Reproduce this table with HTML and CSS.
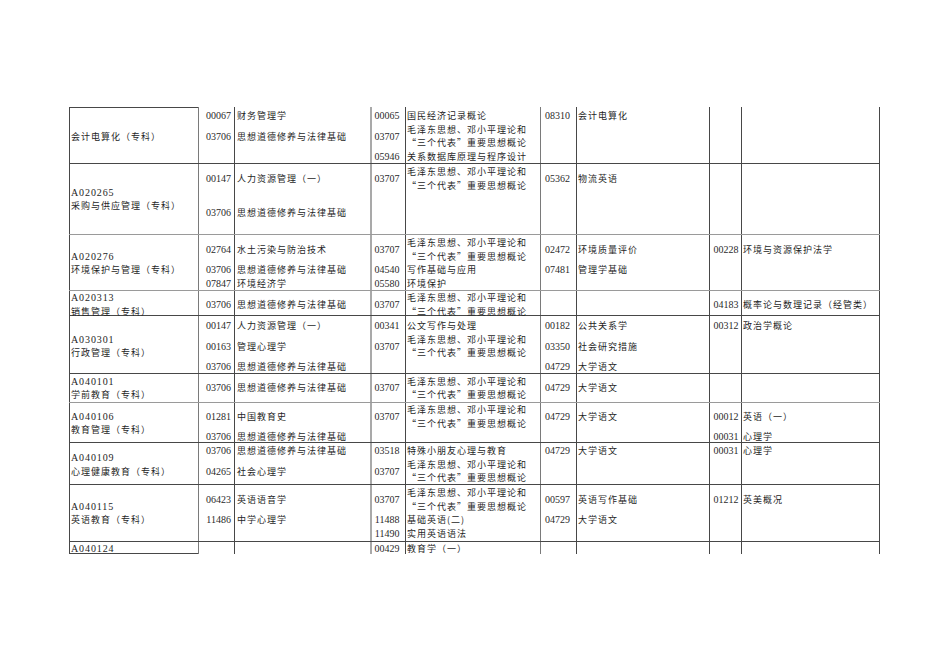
FILE: index.html
```html
<!DOCTYPE html>
<html lang="zh-CN">
<head>
<meta charset="utf-8">
<title>专业课程表</title>
<link rel="stylesheet" href="styles.css">
</head>
<body>
<div class="sheet">

  <div class="r r1">
    <div class="nm top"><div class="ln k3">会计电算化（专科）</div></div>
    <div class="cd"><div class="ln">00067</div><div class="ln k1">03706</div></div>
    <div class="tx"><div class="ln">财务管理学</div><div class="ln k1">思想道德修养与法律基础</div></div>
    <div class="cd"><div class="ln">00065</div><div class="ln k1">03707</div><div class="ln k1">05946</div></div>
    <div class="tx"><div class="ln">国民经济记录概论</div><div class="ln">毛泽东思想、邓小平理论和</div><div class="ln">“三个代表”重要思想概论</div><div class="ln">关系数据库原理与程序设计</div></div>
    <div class="cd"><div class="ln">08310</div></div>
    <div class="tx"><div class="ln">会计电算化</div></div>
    <div class="cd"></div>
    <div class="tx"></div>
  </div>

  <div class="r r2">
    <div class="nm"><div class="ln lat k3">A020265</div><div class="ln">采购与供应管理（专科）</div></div>
    <div class="cd"><div class="ln k1">00147</div><div class="ln k3">03706</div></div>
    <div class="tx"><div class="ln k1">人力资源管理（一）</div><div class="ln k3">思想道德修养与法律基础</div></div>
    <div class="cd"><div class="ln k1">03707</div></div>
    <div class="tx"><div class="ln">毛泽东思想、邓小平理论和</div><div class="ln">“三个代表”重要思想概论</div></div>
    <div class="cd"><div class="ln k1">05362</div></div>
    <div class="tx"><div class="ln k1">物流英语</div></div>
    <div class="cd"></div>
    <div class="tx"></div>
  </div>

  <div class="r r3">
    <div class="nm"><div class="ln lat k2">A020276</div><div class="ln">环境保护与管理（专科）</div></div>
    <div class="cd"><div class="ln k1">02764</div><div class="ln k1">03706</div><div class="ln">07847</div></div>
    <div class="tx"><div class="ln k1">水土污染与防治技术</div><div class="ln k1">思想道德修养与法律基础</div><div class="ln">环境经济学</div></div>
    <div class="cd"><div class="ln k1">03707</div><div class="ln k1">04540</div><div class="ln">05580</div></div>
    <div class="tx"><div class="ln">毛泽东思想、邓小平理论和</div><div class="ln">“三个代表”重要思想概论</div><div class="ln">写作基础与应用</div><div class="ln">环境保护</div></div>
    <div class="cd"><div class="ln k1">02472</div><div class="ln k1">07481</div></div>
    <div class="tx"><div class="ln k1">环境质量评价</div><div class="ln k1">管理学基础</div></div>
    <div class="cd"><div class="ln k1">00228</div></div>
    <div class="tx"><div class="ln k1">环境与资源保护法学</div></div>
  </div>

  <div class="r r4">
    <div class="nm"><div class="ln lat">A020313</div><div class="ln">销售管理（专科）</div></div>
    <div class="cd"><div class="ln k1">03706</div></div>
    <div class="tx"><div class="ln k1">思想道德修养与法律基础</div></div>
    <div class="cd"><div class="ln k1">03707</div></div>
    <div class="tx"><div class="ln">毛泽东思想、邓小平理论和</div><div class="ln">“三个代表”重要思想概论</div></div>
    <div class="cd"></div>
    <div class="tx"></div>
    <div class="cd"><div class="ln k1">04183</div></div>
    <div class="tx"><div class="ln k1">概率论与数理记录（经管类）</div></div>
  </div>

  <div class="r r5">
    <div class="nm"><div class="ln lat k2">A030301</div><div class="ln">行政管理（专科）</div></div>
    <div class="cd"><div class="ln">00147</div><div class="ln k1">00163</div><div class="ln k1">03706</div></div>
    <div class="tx"><div class="ln">人力资源管理（一）</div><div class="ln k1">管理心理学</div><div class="ln k1">思想道德修养与法律基础</div></div>
    <div class="cd"><div class="ln">00341</div><div class="ln k1">03707</div></div>
    <div class="tx"><div class="ln">公文写作与处理</div><div class="ln">毛泽东思想、邓小平理论和</div><div class="ln">“三个代表”重要思想概论</div></div>
    <div class="cd"><div class="ln">00182</div><div class="ln k1">03350</div><div class="ln k1">04729</div></div>
    <div class="tx"><div class="ln">公共关系学</div><div class="ln k1">社会研究措施</div><div class="ln k1">大学语文</div></div>
    <div class="cd"><div class="ln">00312</div></div>
    <div class="tx"><div class="ln">政治学概论</div></div>
  </div>

  <div class="r r6">
    <div class="nm"><div class="ln lat">A040101</div><div class="ln">学前教育（专科）</div></div>
    <div class="cd"><div class="ln k1">03706</div></div>
    <div class="tx"><div class="ln k1">思想道德修养与法律基础</div></div>
    <div class="cd"><div class="ln k1">03707</div></div>
    <div class="tx"><div class="ln">毛泽东思想、邓小平理论和</div><div class="ln">“三个代表”重要思想概论</div></div>
    <div class="cd"><div class="ln k1">04729</div></div>
    <div class="tx"><div class="ln k1">大学语文</div></div>
    <div class="cd"></div>
    <div class="tx"></div>
  </div>

  <div class="r r7">
    <div class="nm"><div class="ln lat k1">A040106</div><div class="ln">教育管理（专科）</div></div>
    <div class="cd"><div class="ln k1">01281</div><div class="ln k1">03706</div></div>
    <div class="tx"><div class="ln k1">中国教育史</div><div class="ln k1">思想道德修养与法律基础</div></div>
    <div class="cd"><div class="ln k1">03707</div></div>
    <div class="tx"><div class="ln">毛泽东思想、邓小平理论和</div><div class="ln">“三个代表”重要思想概论</div></div>
    <div class="cd"><div class="ln k1">04729</div></div>
    <div class="tx"><div class="ln k1">大学语文</div></div>
    <div class="cd"><div class="ln k1">00012</div><div class="ln k1">00031</div></div>
    <div class="tx"><div class="ln k1">英语（一）</div><div class="ln k1">心理学</div></div>
  </div>

  <div class="r r8">
    <div class="nm"><div class="ln lat k1">A040109</div><div class="ln">心理健康教育（专科）</div></div>
    <div class="cd"><div class="ln">03706</div><div class="ln k1">04265</div></div>
    <div class="tx"><div class="ln">思想道德修养与法律基础</div><div class="ln k1">社会心理学</div></div>
    <div class="cd"><div class="ln">03518</div><div class="ln k1">03707</div></div>
    <div class="tx"><div class="ln">特殊小朋友心理与教育</div><div class="ln">毛泽东思想、邓小平理论和</div><div class="ln">“三个代表”重要思想概论</div></div>
    <div class="cd"><div class="ln">04729</div></div>
    <div class="tx"><div class="ln">大学语文</div></div>
    <div class="cd"><div class="ln">00031</div></div>
    <div class="tx"><div class="ln">心理学</div></div>
  </div>

  <div class="r r9">
    <div class="nm"><div class="ln lat k2">A040115</div><div class="ln">英语教育（专科）</div></div>
    <div class="cd"><div class="ln k1">06423</div><div class="ln k1">11486</div></div>
    <div class="tx"><div class="ln k1">英语语音学</div><div class="ln k1">中学心理学</div></div>
    <div class="cd"><div class="ln k1">03707</div><div class="ln k1">11488</div><div class="ln">11490</div></div>
    <div class="tx"><div class="ln">毛泽东思想、邓小平理论和</div><div class="ln">“三个代表”重要思想概论</div><div class="ln">基础英语(二)</div><div class="ln">实用英语语法</div></div>
    <div class="cd"><div class="ln k1">00597</div><div class="ln k1">04729</div></div>
    <div class="tx"><div class="ln k1">英语写作基础</div><div class="ln k1">大学语文</div></div>
    <div class="cd"><div class="ln k1">01212</div></div>
    <div class="tx"><div class="ln k1">英美概况</div></div>
  </div>

  <div class="r r10">
    <div class="nm"><div class="ln lat">A040124</div></div>
    <div class="cd"></div>
    <div class="tx"></div>
    <div class="cd"><div class="ln">00429</div></div>
    <div class="tx"><div class="ln">教育学（一）</div></div>
    <div class="cd"></div>
    <div class="tx"></div>
    <div class="cd"></div>
    <div class="tx"></div>
  </div>

</div>
</body>
</html>
```
FILE: styles.css
```css
html, body {
  margin: 0;
  padding: 0;
  background: #ffffff;
}

body {
  color: #1e1e1e;
  font-family: "Noto Sans CJK SC", sans-serif;
}

.sheet {
  margin: 107px 0 0 69px;
  width: 811px;
}

.r {
  display: grid;
  grid-template-columns: 129px 36px 136px 35px 135px 36px 133px 32px 139px;
  grid-template-rows: minmax(0, 1fr);
  box-sizing: border-box;
  border-bottom: 1px solid #474747;
}

.r > div {
  box-sizing: border-box;
  border-left: 1px solid #474747;
  min-height: 0;
  padding-top: 1.2px;
}

.r > div:last-child {
  border-right: 1px solid #474747;
}

/* grey code-column rules */
.r > div:nth-child(2),
.r > div:nth-child(6) {
  border-left-color: #7a7a7a;
}

.r > div:nth-child(4) {
  border-left: 2px solid #a9a9a9;
}

.nm,
.tx {
  font-family: "Noto Sans CJK SC", sans-serif;
  font-size: 9px;
  letter-spacing: 1px;
  text-spacing-trim: space-all;
  padding-left: 1px;
  color: #1e1e1e;
}

.r > .tx:nth-child(3) {
  padding-left: 2px;
}

.cd {
  font-family: "Liberation Serif", serif;
  font-size: 10px;
  text-align: right;
  color: #2a2a2a;
}

.r > .cd:nth-child(2) { padding-right: 3px; }
.r > .cd:nth-child(4) { padding-right: 5.5px; }
.r > .cd:nth-child(6) { padding-right: 6px; }
.r > .cd:nth-child(8) { padding-right: 2.5px; }

.lat {
  font-family: "Liberation Serif", serif;
  font-size: 10px;
  letter-spacing: 0.9px;
}

.ln {
  height: 13.6px;
  line-height: 13.6px;
  white-space: nowrap;
}

.k1 { margin-top: 6.8px; }
.k2 { margin-top: 13.6px; }
.k3 { margin-top: 20.4px; }

/* row heights, measured between ruling lines */
.r1 { height: 57px; }
.r2 { height: 71px; border-bottom-color: #9a9a9a; }
.r3 { height: 56px; border-bottom-color: #9a9a9a; }
.r4 { height: 25px; }
.r5 { height: 58px; }
.r6 { height: 29px; border-bottom-color: #9a9a9a; }
.r7 { height: 40px; }
.r8 { height: 42px; }
.r9 { height: 57px; }
.r10 { height: 12px; border-bottom: none; }

.r1 > div { padding-top: 2.2px; }
.r1 > .top {
  border-top: 1px solid #474747;
  padding-top: 1.2px;
}

.r4 > div { padding-top: 0; }
.r5 > div { padding-top: 3.2px; }
.r6 > div { padding-top: 0.7px; }
.r7 > div { padding-top: 0; }
.r10 > div { padding-top: 0; }

.r10 > .nm {
  border-bottom: 1px solid #474747;
}
```
